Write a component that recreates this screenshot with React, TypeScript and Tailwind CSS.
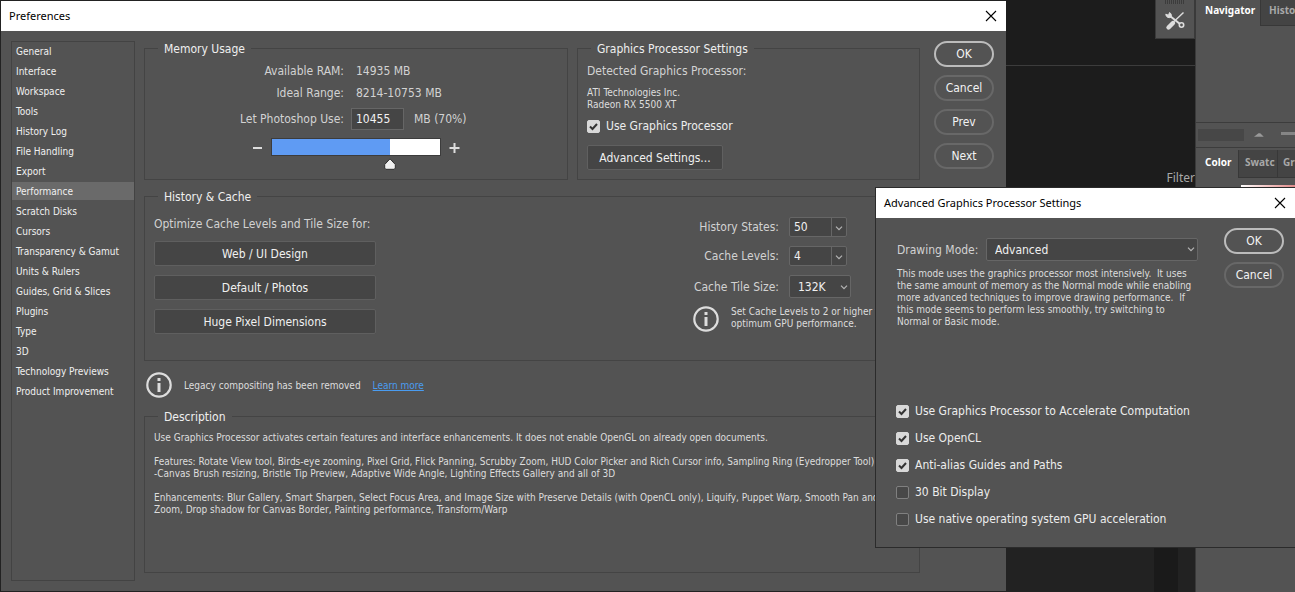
import React, { useState } from 'react';

const SECTIONS = [
  'General', 'Interface', 'Workspace', 'Tools', 'History Log', 'File Handling', 'Export',
  'Performance', 'Scratch Disks', 'Cursors', 'Transparency & Gamut', 'Units & Rulers',
  'Guides, Grid & Slices', 'Plugins', 'Type', '3D', 'Technology Previews', 'Product Improvement'
];

const GPU_OPTIONS = [
  { id: 'accelerate', label: 'Use Graphics Processor to Accelerate Computation', on: true },
  { id: 'opencl', label: 'Use OpenCL', on: true },
  { id: 'antialias', label: 'Anti-alias Guides and Paths', on: true },
  { id: 'bit30', label: '30 Bit Display', on: false },
  { id: 'native', label: 'Use native operating system GPU acceleration', on: false }
];

function TitleBar({ title }: { title: string }) {
  return (
    <header className="flex h-[30px] shrink-0 items-center justify-between bg-white pl-2 pr-[9px] text-black">
      <h2 className="font-['Noto_Sans',sans-serif] text-[11px]">{title}</h2>
      <button aria-label={`Close ${title}`} className="flex h-3 w-3 items-center justify-center">
        <svg viewBox="0 0 12 12" className="h-3 w-3" stroke="black" strokeWidth="1.1">
          <path d="M1 1l10 10M11 1L1 11" />
        </svg>
      </button>
    </header>
  );
}

function PillButton({ label, primary = false }: { label: string; primary?: boolean }) {
  return (
    <button
      className={`h-[26px] w-[60px] rounded-full border-2 text-xs text-[#f2f2f2] ${
        primary ? 'border-[#bcbcbc]' : 'border-[#686868]'
      }`}
    >
      {label}
    </button>
  );
}

function Check({ id, label, on }: { id: string; label: string; on: boolean }) {
  const [checked, setChecked] = useState(on);
  return (
    <label htmlFor={id} className="flex h-5 items-center gap-[6px] text-xs text-[#ededed]">
      <span className="relative flex h-[13px] w-[13px] shrink-0">
        <input
          id={id}
          type="checkbox"
          checked={checked}
          onChange={() => setChecked(!checked)}
          className="h-[13px] w-[13px] appearance-none rounded-[2px] border border-[#808080] bg-[#484848] checked:border-[#d8d8d8] checked:bg-[#d8d8d8]"
        />
        {checked && (
          <svg viewBox="0 0 13 13" className="pointer-events-none absolute inset-0" fill="none" stroke="#333333" strokeWidth="2">
            <path d="M3 6.5l2.5 2.5L10 4" />
          </svg>
        )}
      </span>
      {label}
    </label>
  );
}

function Group({ title, className, children }: { title: string; className?: string; children: React.ReactNode }) {
  return (
    <fieldset className={`min-w-0 border border-[#444444] ${className ?? ''}`}>
      <legend className="ml-[13px] h-[14px] px-[6px] text-xs leading-4 text-[#efefef]">{title}</legend>
      {children}
    </fieldset>
  );
}

function InfoIcon() {
  return (
    <svg viewBox="0 0 26 26" className="h-[26px] w-[26px] shrink-0" fill="none" stroke="#dddddd">
      <circle cx="13" cy="13" r="11.7" strokeWidth="2.2" />
      <path d="M13 11v9" strokeWidth="3" />
      <path d="M13 6v3" strokeWidth="3" />
    </svg>
  );
}

function Chevron() {
  return (
    <svg viewBox="0 0 8 5" className="h-[5px] w-2" fill="none" stroke="#b5b5b5" strokeWidth="1.2">
      <path d="M1 0.7l3 3 3-3" />
    </svg>
  );
}

function Combo({ id, value }: { id: string; value: string }) {
  return (
    <span className="flex h-5 w-[58px] rounded-[2px] border border-[#666666] bg-[#454545]">
      <input id={id} defaultValue={value} className="w-[41px] bg-transparent pl-1 text-xs text-[#f0f0f0]" />
      <button aria-label={`Open ${id}`} className="flex flex-1 items-center justify-center border-l border-[#666666] pt-[2px]">
        <Chevron />
      </button>
    </span>
  );
}

function MemoryUsage() {
  const [percent, setPercent] = useState(70);
  return (
    <Group title="Memory Usage" className="h-[139px]">
      <div className="grid grid-cols-[199px_1fr] items-center gap-x-3 pt-[5px] text-xs text-[#d2d2d2]">
        <span className="h-[22px] text-right leading-[22px]">Available RAM:</span>
        <span>14935 MB</span>
        <span className="h-[22px] text-right leading-[22px]">Ideal Range:</span>
        <span>8214-10753 MB</span>
        <label htmlFor="memory" className="text-right">Let Photoshop Use:</label>
        <span className="-ml-[5px] flex h-[30px] items-center gap-[10px]">
          <input
            id="memory"
            defaultValue="10455"
            className="h-[22px] w-[53px] border border-[#666666] bg-[#454545] px-1 text-xs text-[#f2f2f2]"
          />
          <span>MB (70%)</span>
        </span>
      </div>
      <div className="flex gap-2 pl-[107px] pt-1">
        <button aria-label="Decrease memory" className="flex h-[18px] w-[11px] items-center">
          <svg viewBox="0 0 11 11" className="h-[11px] w-[11px]" stroke="#dddddd" strokeWidth="2">
            <path d="M1 6h9" />
          </svg>
        </button>
        <div className="relative h-[18px] w-[170px]">
          <input
            type="range"
            aria-label="Memory share"
            value={percent}
            onChange={(e) => setPercent(Number(e.target.value))}
            className="block h-[18px] w-full appearance-none border border-[#3c3c3c] [&::-webkit-slider-thumb]:appearance-none"
            style={{ background: `linear-gradient(to right, #5f9bf3 ${percent}%, #ffffff ${percent}%)` }}
          />
          <svg
            viewBox="0 0 12 12"
            className="absolute top-5 h-3 w-3 -translate-x-1/2"
            style={{ left: `${percent}%` }}
            fill="#f0f0f0"
            stroke="#2e2e2e"
          >
            <path d="M6 0.8L0.7 6.5v3.6l1.2 1.2h8.200l1.200-1.200V6.500z" />
          </svg>
        </div>
        <button aria-label="Increase memory" className="flex h-[18px] w-[11px] items-center">
          <svg viewBox="0 0 11 11" className="h-[11px] w-[11px]" stroke="#dddddd" strokeWidth="2">
            <path d="M0.5 6h10M5.5 1v10" />
          </svg>
        </button>
      </div>
    </Group>
  );
}

function GraphicsSettings() {
  return (
    <Group title="Graphics Processor Settings" className="h-[139px]">
      <div className="flex flex-col items-start pl-[9px] pt-2">
        <p className="text-xs text-[#d2d2d2]">Detected Graphics Processor:</p>
        <p className="mt-2 text-[10px] leading-3 text-[#dddddd]">
          ATI Technologies Inc.
          <br />
          Radeon RX 5500 XT
        </p>
        <div className="mt-[5px]">
          <Check id="use-gpu" label="Use Graphics Processor" on />
        </div>
        <button className="mt-[9px] h-[25px] w-[136px] rounded-[2px] border border-[#606060] bg-[#454545] text-xs text-[#f0f0f0]">
          Advanced Settings...
        </button>
      </div>
    </Group>
  );
}

function HistoryCache() {
  return (
    <Group title="History & Cache" className="h-[172px]">
      <div className="flex justify-between pl-[9px]">
        <div className="flex flex-col gap-[9px] pt-[13px] text-xs">
          <p className="whitespace-nowrap text-[#d2d2d2]">Optimize Cache Levels and Tile Size for:</p>
          {['Web / UI Design', 'Default / Photos', 'Huge Pixel Dimensions'].map((preset) => (
            <button key={preset} className="h-[25px] w-[222px] rounded-[2px] border border-[#5f5f5f] bg-[#454545] text-[#f0f0f0]">
              {preset}
            </button>
          ))}
        </div>
        <div className="w-[229px] pt-[14px]">
          <div className="grid grid-cols-[89px_1fr] items-center gap-x-[10px] gap-y-[9px] text-xs text-[#d2d2d2]">
            <label htmlFor="history-states" className="text-right">History States:</label>
            <Combo id="history-states" value="50" />
            <label htmlFor="cache-levels" className="text-right">Cache Levels:</label>
            <Combo id="cache-levels" value="4" />
            <label htmlFor="tile-size" className="text-right">Cache Tile Size:</label>
            <span className="relative flex h-[23px] w-[62px]">
              <select id="tile-size" className="w-full appearance-none rounded-[2px] border border-[#666666] bg-[#454545] pl-2 text-xs text-[#f0f0f0]">
                <option>132K</option>
                <option>1024K</option>
              </select>
              <span className="pointer-events-none absolute right-[3px] top-[10px]"><Chevron /></span>
            </span>
          </div>
          <div className="flex gap-3 pl-[3px] pt-2">
            <InfoIcon />
            <p className="whitespace-nowrap text-[10px] leading-3 text-[#dddddd]">
              Set Cache Levels to 2 or higher for
              <br />
              optimum GPU performance.
            </p>
          </div>
        </div>
      </div>
    </Group>
  );
}

function Preferences() {
  return (
    <section className="flex min-w-0 flex-1 flex-col border-y border-l border-[#222222] bg-[#535353]">
      <TitleBar title="Preferences" />
      <div className="flex flex-1 py-[10px] pl-[10px] pr-3">
        <nav className="w-[124px] shrink-0 border border-[#434343]">
          <ul className="flex flex-col gap-[2px] text-[10px] text-[#f0f0f0]">
            {SECTIONS.map((name) => (
              <li key={name} className={name === 'Performance' ? 'bg-[#6a6a6a]' : ''}>
                <a href="#" className="block h-[18px] whitespace-nowrap pl-1 leading-5">{name}</a>
              </li>
            ))}
          </ul>
        </nav>

        <div className="ml-[9px] flex min-w-0 flex-1 flex-col pb-2">
          <div className="grid grid-cols-[424fr_343fr] gap-[9px]">
            <MemoryUsage />
            <GraphicsSettings />
          </div>
          <div className="mt-[9px]">
            <HistoryCache />
          </div>
          <div className="flex h-12 items-center pl-[2px] text-[10px] text-[#dddddd]">
            <InfoIcon />
            <span className="ml-3">Legacy compositing has been removed</span>
            <a href="#" className="ml-3 text-[#4a9cf0] underline">Learn more</a>
          </div>
          <Group title="Description" className="flex-1">
            <div className="flex flex-col gap-3 whitespace-nowrap pl-[9px] pt-[9px] text-[10px] leading-3 text-[#dddddd]">
              <p>Use Graphics Processor activates certain features and interface enhancements. It does not enable OpenGL on already open documents.</p>
              <p>
                Features: Rotate View tool, Birds-eye zooming, Pixel Grid, Flick Panning, Scrubby Zoom, HUD Color Picker and Rich Cursor info, Sampling Ring (Eyedropper Tool)
                <br />
                -Canvas Brush resizing, Bristle Tip Preview, Adaptive Wide Angle, Lighting Effects Gallery and all of 3D
              </p>
              <p>
                Enhancements: Blur Gallery, Smart Sharpen, Select Focus Area, and Image Size with Preserve Details (with OpenCL only), Liquify, Puppet Warp, Smooth Pan and
                <br />
                Zoom, Drop shadow for Canvas Border, Painting performance, Transform/Warp
              </p>
            </div>
          </Group>
        </div>

        <div className="ml-[14px] flex flex-col gap-2">
          <PillButton label="OK" primary />
          <PillButton label="Cancel" />
          <PillButton label="Prev" />
          <PillButton label="Next" />
        </div>
      </div>
    </section>
  );
}

// Slice of the editor that stays visible beside the dialogs
function Workspace() {
  return (
    <aside className="flex w-[289px] shrink-0 bg-[#1c1c1c] font-['Noto_Sans',sans-serif]">
      <div className="flex min-w-0 flex-1 flex-col">
        <div className="flex h-[66px] items-start justify-end border-b border-[#3c3c3c]">
          <div className="flex h-[39px] w-10 flex-col items-center gap-[7px] border border-t-0 border-[#3a3a3a] bg-[#535353]">
            <svg viewBox="0 0 20 4" className="h-1 w-5" stroke="#3c3c3c" strokeDasharray="1 1" strokeWidth="4">
              <path d="M0 2h20" />
            </svg>
            <svg viewBox="0 0 20 20" className="h-5 w-5" fill="none" stroke="#dddddd">
              <path d="M5 5l10 8" strokeWidth="2" />
              <circle cx="16.5" cy="14" r="2.2" strokeWidth="1.6" />
              <path d="M0.8 3.2l2.700 1 1-2.600a3.200 3.200 0 0 1 1.400 4.600a3.400 3.400 0 0 1-5.100-3z" fill="#dddddd" />
              <path d="M18.500 1.500L9 10.500" strokeWidth="1.400" />
              <path d="M8 12l-4.500 4.500" strokeWidth="4.400" strokeLinecap="round" />
            </svg>
          </div>
        </div>
        <p className="mt-[104px] self-end overflow-hidden text-xs leading-4 text-[#a8a8a8]">Filter</p>
        <div className="mt-auto flex h-[45px] bg-[#222222] pr-[17px]">
          <span className="ml-auto w-6 bg-[#1a1a1a]" />
        </div>
      </div>
      <div className="flex w-[100px] shrink-0 flex-col overflow-hidden border-l border-[#3a3a3a] bg-[#535353] text-[10px] font-bold">
        <div className="flex h-[26px] text-[#a8a8a8]">
          <span className="w-16 shrink-0 pl-[9px] pt-[3px] text-white">Navigator</span>
          <span className="flex-1 border-b border-l border-[#383838] bg-[#444444] pl-2 pt-[3px]">Histo</span>
        </div>
        <div className="mt-24 flex h-[26px] shrink-0 items-center border-y border-[#3c3c3c] pl-[2px]">
          <span className="h-3 w-[52px] bg-[#474747]" />
          <svg viewBox="0 0 12 6" className="ml-[10px] h-[6px] w-3" fill="#999999">
            <path d="M0 5l5-4h2l4 4z" />
          </svg>
          <span className="mb-1 ml-4 h-[3px] w-4 bg-[#858585]" />
        </div>
        <div className="mt-[2px] flex h-7 shrink-0 text-[#a8a8a8]">
          <span className="w-[42px] shrink-0 pl-[9px] pt-[5px] text-white">Color</span>
          <span className="w-[39px] shrink-0 overflow-hidden border-b border-l border-[#383838] bg-[#444444] pl-[6px] pt-[5px]">Swatc</span>
          <span className="flex-1 border-b border-l border-[#383838] bg-[#444444] pl-[5px] pt-[5px]">Gr</span>
        </div>
        <span className="ml-[45px] mt-[7px] h-[6px] bg-linear-to-r from-white to-[#e08a8a]" />
      </div>
    </aside>
  );
}

function AdvancedDialog() {
  return (
    <section className="absolute right-0 top-[187px] w-[420px] border border-r-0 border-[#2b2b2b] bg-[#535353]">
      <TitleBar title="Advanced Graphics Processor Settings" />
      <div className="flex h-[329px] justify-between pl-[21px] pr-[11px] pt-[10px]">
        <div className="flex flex-col pt-[10px]">
          <div className="flex items-center gap-[6px] text-xs text-[#d2d2d2]">
            <label htmlFor="drawing-mode" className="w-[83px] whitespace-nowrap">Drawing Mode:</label>
            <span className="relative flex h-[23px] w-[212px]">
              <select id="drawing-mode" className="w-full appearance-none rounded-[2px] border border-[#666666] bg-[#454545] pl-2 text-xs text-[#f0f0f0]">
                <option>Advanced</option>
                <option>Normal</option>
                <option>Basic</option>
              </select>
              <span className="pointer-events-none absolute right-[3px] top-[9px]"><Chevron /></span>
            </span>
          </div>
          <p className="mt-[7px] whitespace-nowrap text-[10px] leading-3 text-[#dddddd]">
            This mode uses the graphics processor most intensively.&nbsp; It uses
            <br />
            the same amount of memory as the Normal mode while enabling
            <br />
            more advanced techniques to improve drawing performance.&nbsp; If
            <br />
            this mode seems to perform less smoothly, try switching to
            <br />
            Normal or Basic mode.
          </p>
          <div className="-ml-px mb-[18px] mt-auto flex flex-col gap-[7px]">
            {GPU_OPTIONS.map((option) => (
              <Check key={option.id} {...option} />
            ))}
          </div>
        </div>
        <div className="flex flex-col gap-2">
          <PillButton label="OK" primary />
          <PillButton label="Cancel" />
        </div>
      </div>
    </section>
  );
}

export default function App() {
  return (
    <main className="relative flex min-h-screen overflow-hidden bg-[#1c1c1c] font-['DejaVu_Sans_Condensed',sans-serif]">
      <Preferences />
      <Workspace />
      <AdvancedDialog />
    </main>
  );
}
